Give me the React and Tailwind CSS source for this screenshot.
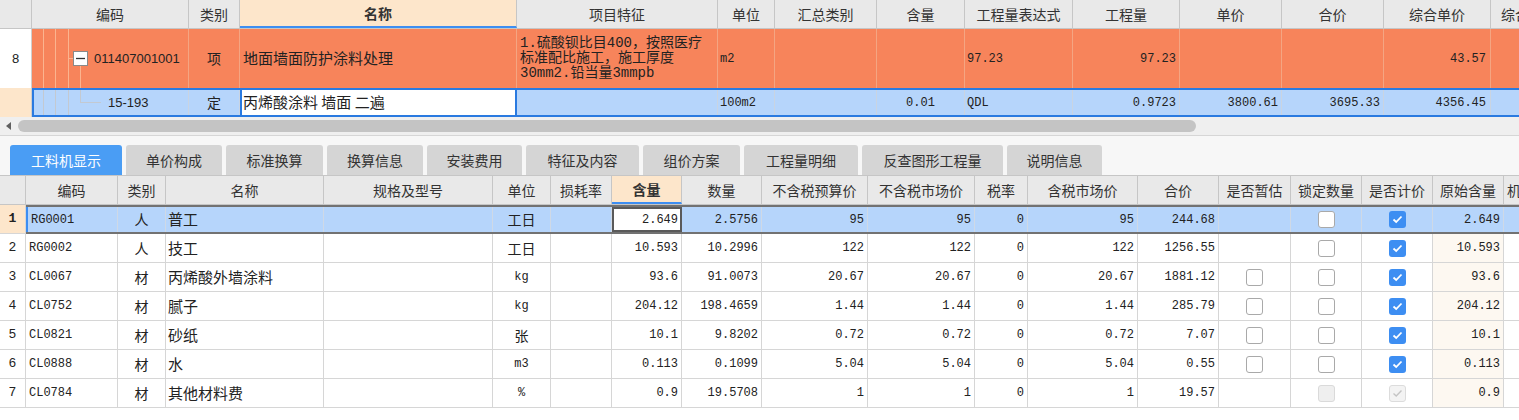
import React from "react";

const cn = "font-['Noto_Sans_CJK_SC','Noto_Sans',sans-serif]";
const mono = "font-['Liberation_Mono','Noto_Sans_CJK_SC',monospace]";
const sans = "font-['Liberation_Sans','Noto_Sans_CJK_SC',sans-serif]";

// top grid columns (row number column handled separately)
const TOP_COLS =
  "grid grid-cols-[157px_51px_277px_201px_57px_102px_88px_108px_107px_102px_102px_107px_140px]";
const TOP_COLS_SEL =
  "grid grid-cols-[155px_51px_277px_201px_57px_102px_88px_108px_107px_102px_102px_107px_140px]";

// bottom grid columns
const LOW_COLS =
  "grid grid-cols-[92px_48px_158px_169px_58px_61px_70px_80px_106px_107px_53px_110px_81px_72px_71px_71px_71px_120px]";

const topHeaders = [
  "编码", "类别", "名称", "项目特征", "单位", "汇总类别", "含量",
  "工程量表达式", "工程量", "单价", "合价", "综合单价",
];

const lowHeaders = [
  "编码", "类别", "名称", "规格及型号", "单位", "损耗率", "含量", "数量",
  "不含税预算价", "不含税市场价", "税率", "含税市场价", "合价",
  "是否暂估", "锁定数量", "是否计价", "原始含量",
];

const tabs = [
  { label: "工料机显示", w: "w-[112px]" },
  { label: "单价构成", w: "w-[96px]" },
  { label: "标准换算", w: "w-[97px]" },
  { label: "换算信息", w: "w-[96px]" },
  { label: "安装费用", w: "w-[95px]" },
  { label: "特征及内容", w: "w-[113px]" },
  { label: "组价方案", w: "w-[97px]" },
  { label: "工程量明细", w: "w-[114px]" },
  { label: "反查图形工程量", w: "w-[141px]" },
  { label: "说明信息", w: "w-[95px]" },
];

// est: null = no box, "u" unchecked, "du" disabled
const rows = [
  { n: 1, code: "RG0001", type: "人", name: "普工", unit: "工日", cnUnit: true, hl: "2.649", qty: "2.5756", p1: "95", p2: "95", tax: "0", p3: "95", sum: "244.68", est: null, lock: "u", calc: "c", orig: "2.649" },
  { n: 2, code: "RG0002", type: "人", name: "技工", unit: "工日", cnUnit: true, hl: "10.593", qty: "10.2996", p1: "122", p2: "122", tax: "0", p3: "122", sum: "1256.55", est: null, lock: "u", calc: "c", orig: "10.593" },
  { n: 3, code: "CL0067", type: "材", name: "丙烯酸外墙涂料", unit: "kg", hl: "93.6", qty: "91.0073", p1: "20.67", p2: "20.67", tax: "0", p3: "20.67", sum: "1881.12", est: "u", lock: "u", calc: "c", orig: "93.6" },
  { n: 4, code: "CL0752", type: "材", name: "腻子", unit: "kg", hl: "204.12", qty: "198.4659", p1: "1.44", p2: "1.44", tax: "0", p3: "1.44", sum: "285.79", est: "u", lock: "u", calc: "c", orig: "204.12" },
  { n: 5, code: "CL0821", type: "材", name: "砂纸", unit: "张", cnUnit: true, hl: "10.1", qty: "9.8202", p1: "0.72", p2: "0.72", tax: "0", p3: "0.72", sum: "7.07", est: "u", lock: "u", calc: "c", orig: "10.1" },
  { n: 6, code: "CL0888", type: "材", name: "水", unit: "m3", hl: "0.113", qty: "0.1099", p1: "5.04", p2: "5.04", tax: "0", p3: "5.04", sum: "0.55", est: "u", lock: "u", calc: "c", orig: "0.113" },
  { n: 7, code: "CL0784", type: "材", name: "其他材料费", unit: "%", hl: "0.9", qty: "19.5708", p1: "1", p2: "1", tax: "0", p3: "1", sum: "19.57", est: null, lock: "du", calc: "dc", orig: "0.9" },
];

function Check({ state }) {
  if (!state) return null;
  if (state === "c")
    return (
      <span className="w-[17px] h-[17px] rounded-[3px] bg-[#3d8ef2] flex items-center justify-center">
        <svg width="11" height="9" viewBox="0 0 11 9">
          <path d="M1.5 4.5 L4.2 7 L9.5 1.5" fill="none" stroke="#fff" strokeWidth="1.8" />
        </svg>
      </span>
    );
  if (state === "dc")
    return (
      <span className="w-[17px] h-[17px] rounded-[3px] bg-[#f3f3f3] border border-[#dcdcdc] flex items-center justify-center">
        <svg width="11" height="9" viewBox="0 0 11 9">
          <path d="M1.5 4.5 L4.2 7 L9.5 1.5" fill="none" stroke="#c4c4c4" strokeWidth="1.4" />
        </svg>
      </span>
    );
  if (state === "du")
    return <span className="w-[17px] h-[17px] rounded-[3px] bg-[#efefef] border border-[#dadada]" />;
  return <span className="w-[17px] h-[17px] rounded-[3px] bg-white border border-[#a9a9a9]" />;
}

function TopHeader() {
  return (
    <div className="flex h-[29px] bg-[#e9e9e9] border-b border-[#c6c6c6] text-[14px] text-[#333]">
      <div className="w-[32px] shrink-0 border-r border-[#c6c6c6]" />
      <div className={TOP_COLS}>
        {topHeaders.map((h) => (
          <div
            key={h}
            className={
              h === "名称"
                ? "flex items-center justify-center border-r border-[#c6c6c6] bg-[#fde6cb] font-bold border-b-2 border-b-[#3d8ef2]"
                : "flex items-center justify-center border-r border-[#c6c6c6]"
            }
          >
            {h}
          </div>
        ))}
        <div className="flex items-center pl-[10px] overflow-hidden whitespace-nowrap">综合合价</div>
      </div>
    </div>
  );
}

function BillRow() {
  const c = "flex items-center border-r border-[#f4a582] h-full";
  return (
    <div className="flex h-[59px] text-[#222]">
      <div className={`w-[32px] shrink-0 bg-white border-r border-[#cfcfcf] flex items-center justify-center text-[13px] ${sans}`}>
        8
      </div>
      <div className={`${TOP_COLS} bg-[#f7845b]`}>
        <div className={c}>
          <svg width="62" height="59" className="shrink-0">
            <line x1="11.5" y1="0" x2="11.5" y2="59" stroke="#fbb48f" />
            <line x1="23.5" y1="0" x2="23.5" y2="59" stroke="#fbb48f" />
            <line x1="36.5" y1="0" x2="36.5" y2="59" stroke="#fbb48f" />
            <line x1="36" y1="29.5" x2="41" y2="29.5" stroke="#fbb48f" />
            <line x1="48.5" y1="36" x2="48.5" y2="59" stroke="#fbb48f" />
            <rect x="41.5" y="22.5" width="14" height="14" fill="#fff" stroke="#8a8a8a" />
            <line x1="44" y1="29.5" x2="53" y2="29.5" stroke="#333" strokeWidth="1.3" />
          </svg>
          <span className={`text-[13px] ${sans}`}>011407001001</span>
        </div>
        <div className={`${c} justify-center text-[14px]`}>项</div>
        <div className={`${c} pl-[3px] text-[15px]`}>地面墙面防护涂料处理</div>
        <div className={`${c} pl-[3px] text-[14px] leading-[15px] ${mono}`}>
          <div>
            1.硫酸钡比目400，按照医疗
            <br />
            标准配比施工，施工厚度
            <br />
            30mm2.铅当量3mmpb
          </div>
        </div>
        <div className={`${c} pl-[2px] text-[12px] ${mono}`}>m2</div>
        <div className={c} />
        <div className={c} />
        <div className={`${c} pl-[2px] text-[12px] ${mono}`}>97.23</div>
        <div className={`${c} justify-end pr-[3px] text-[12px] ${mono}`}>97.23</div>
        <div className={c} />
        <div className={c} />
        <div className={`${c} justify-end pr-[4px] text-[12px] ${mono}`}>43.57</div>
        <div className={c} />
      </div>
    </div>
  );
}

function NormRow() {
  const c = "flex items-center border-r border-[#c9d4e2] h-full";
  return (
    <div className="flex h-[29px] text-[#222]">
      <div className="w-[32px] shrink-0 bg-[#fde6cb] border-r border-[#cfcfcf]" />
      <div className={`${TOP_COLS_SEL} bg-[#b6d5fb] border-2 border-r-0 border-[#2a7ae0]`}>
        <div className={c}>
          <svg width="74" height="25" className="shrink-0">
            <line x1="9.5" y1="0" x2="9.5" y2="25" stroke="#c3c9d1" />
            <line x1="21.5" y1="0" x2="21.5" y2="25" stroke="#c3c9d1" />
            <line x1="34.5" y1="0" x2="34.5" y2="25" stroke="#c3c9d1" />
            <line x1="46.5" y1="0" x2="46.5" y2="12" stroke="#c3c9d1" />
            <line x1="46" y1="12.5" x2="67" y2="12.5" stroke="#c3c9d1" />
          </svg>
          <span className={`text-[13px] ${sans}`}>15-193</span>
        </div>
        <div className={`${c} justify-center text-[14px]`}>定</div>
        <div className="flex items-center h-full bg-white border-x-2 border-[#2a7ae0] pl-[1px] text-[15px]">
          丙烯酸涂料 墙面 二遍
        </div>
        <div className={c} />
        <div className={`${c} pl-[2px] text-[12px] ${mono}`}>100m2</div>
        <div className={c} />
        <div className={`${c} justify-center text-[12px] ${mono}`}>0.01</div>
        <div className={`${c} pl-[2px] text-[12px] ${mono}`}>QDL</div>
        <div className={`${c} justify-end pr-[3px] text-[12px] ${mono}`}>0.9723</div>
        <div className={`${c} justify-end pr-[3px] text-[12px] ${mono}`}>3800.61</div>
        <div className={`${c} justify-end pr-[3px] text-[12px] ${mono}`}>3695.33</div>
        <div className={`${c} justify-end pr-[4px] text-[12px] ${mono}`}>4356.45</div>
        <div className={c} />
      </div>
    </div>
  );
}

function ScrollBar() {
  return (
    <div className="flex items-center h-[19px] bg-[#efefef] border-b border-[#d6d6d6]">
      <div className="w-[18px] flex items-center justify-center">
        <svg width="6" height="8" viewBox="0 0 6 8">
          <path d="M5 0 L0 4 L5 8 Z" fill="#606060" />
        </svg>
      </div>
      <div className="w-[1178px] h-[12px] rounded-full bg-[#c4c4c4]" />
    </div>
  );
}

function Tabs() {
  return (
    <div className="flex items-end gap-[4px] h-[30px] pl-[10px] bg-[#f7f7f7]">
      {tabs.map((t, i) => (
        <div
          key={t.label}
          className={
            i === 0
              ? `${t.w} h-[30px] rounded-t-[3px] bg-[#4a9df4] text-white text-[14px] flex items-center justify-center`
              : `${t.w} h-[30px] rounded-t-[3px] bg-[#d5d5d5] text-[#333] text-[14px] flex items-center justify-center`
          }
        >
          {t.label}
        </div>
      ))}
    </div>
  );
}

function LowHeader() {
  return (
    <div className="flex h-[30px] bg-[#e9e9e9] border-y border-[#c6c6c6] text-[14px] text-[#333]">
      <div className="w-[26px] shrink-0 border-r border-[#c6c6c6]" />
      <div className={LOW_COLS}>
        {lowHeaders.map((h) => (
          <div
            key={h}
            className={
              h === "含量"
                ? "flex items-center justify-center border-r border-[#c6c6c6] bg-[#fde6cb] font-bold border-b-2 border-b-[#3d8ef2]"
                : "flex items-center justify-center border-r border-[#c6c6c6] whitespace-nowrap"
            }
          >
            {h}
          </div>
        ))}
        <div className="flex items-center pl-[3px] whitespace-nowrap overflow-hidden">机械含量</div>
      </div>
    </div>
  );
}

function LowRow({ r }) {
  const sel = r.n === 1;
  const b = sel ? "border-[#cfd9e6]" : "border-[#d6d6d6]";
  const c = `flex items-center h-full border-r ${b}`;
  const num = `${c} justify-end pr-[3px] text-[12px] ${mono}`;
  return (
    <div className="flex h-[29px] text-[#222]">
      <div
        className={
          sel
            ? `w-[26px] shrink-0 flex items-center justify-center bg-[#fde6cb] border-r border-b border-[#d6d6d6] text-[13px] font-bold ${mono}`
            : `w-[26px] shrink-0 flex items-center justify-center bg-white border-r border-b border-[#d6d6d6] text-[13px] ${mono}`
        }
      >
        {r.n}
      </div>
      <div
        className={
          sel
            ? `${LOW_COLS} bg-[#b6d5fb] border-y-2 border-[#727272]`
            : `${LOW_COLS} bg-white border-b border-[#d6d6d6]`
        }
      >
        <div className={sel ? `${c} pl-[3px] text-[12px] border-l-2 border-l-[#3d8ef2] ${mono}` : `${c} pl-[3px] text-[12px] ${mono}`}>
          {r.code}
        </div>
        <div className={`${c} justify-center text-[14px]`}>{r.type}</div>
        <div className={`${c} pl-[2px] text-[15px]`}>{r.name}</div>
        <div className={c} />
        <div className={r.cnUnit ? `${c} justify-center text-[14px]` : `${c} justify-center text-[12px] ${mono}`}>
          {r.unit}
        </div>
        <div className={c} />
        {sel ? (
          <div className={`flex items-center justify-end h-full bg-white border-2 border-[#5a5a5a] pr-[2px] text-[12px] ${mono}`}>
            {r.hl}
          </div>
        ) : (
          <div className={num}>{r.hl}</div>
        )}
        <div className={num}>{r.qty}</div>
        <div className={num}>{r.p1}</div>
        <div className={num}>{r.p2}</div>
        <div className={num}>{r.tax}</div>
        <div className={num}>{r.p3}</div>
        <div className={num}>{r.sum}</div>
        <div className={`${c} justify-center`}>
          <Check state={r.est} />
        </div>
        <div className={`${c} justify-center`}>
          <Check state={r.lock} />
        </div>
        <div className={`${c} justify-center`}>
          <Check state={r.calc} />
        </div>
        <div className={sel ? num : `${num} bg-[#fdf8f1]`}>{r.orig}</div>
        <div className={c} />
      </div>
    </div>
  );
}

export default function App() {
  return (
    <div className={`w-[1519px] h-[420px] overflow-hidden bg-white ${cn}`}>
      <div className="w-[1519px] overflow-hidden">
        <div className="w-[1640px]">
          <TopHeader />
          <BillRow />
          <NormRow />
        </div>
      </div>
      <ScrollBar />
      <div className="h-[9px] bg-[#f7f7f7]" />
      <Tabs />
      <div className="w-[1519px] overflow-hidden">
        <div className="w-[1640px]">
          <LowHeader />
          {rows.map((r) => (
            <LowRow key={r.n} r={r} />
          ))}
        </div>
      </div>
    </div>
  );
}
